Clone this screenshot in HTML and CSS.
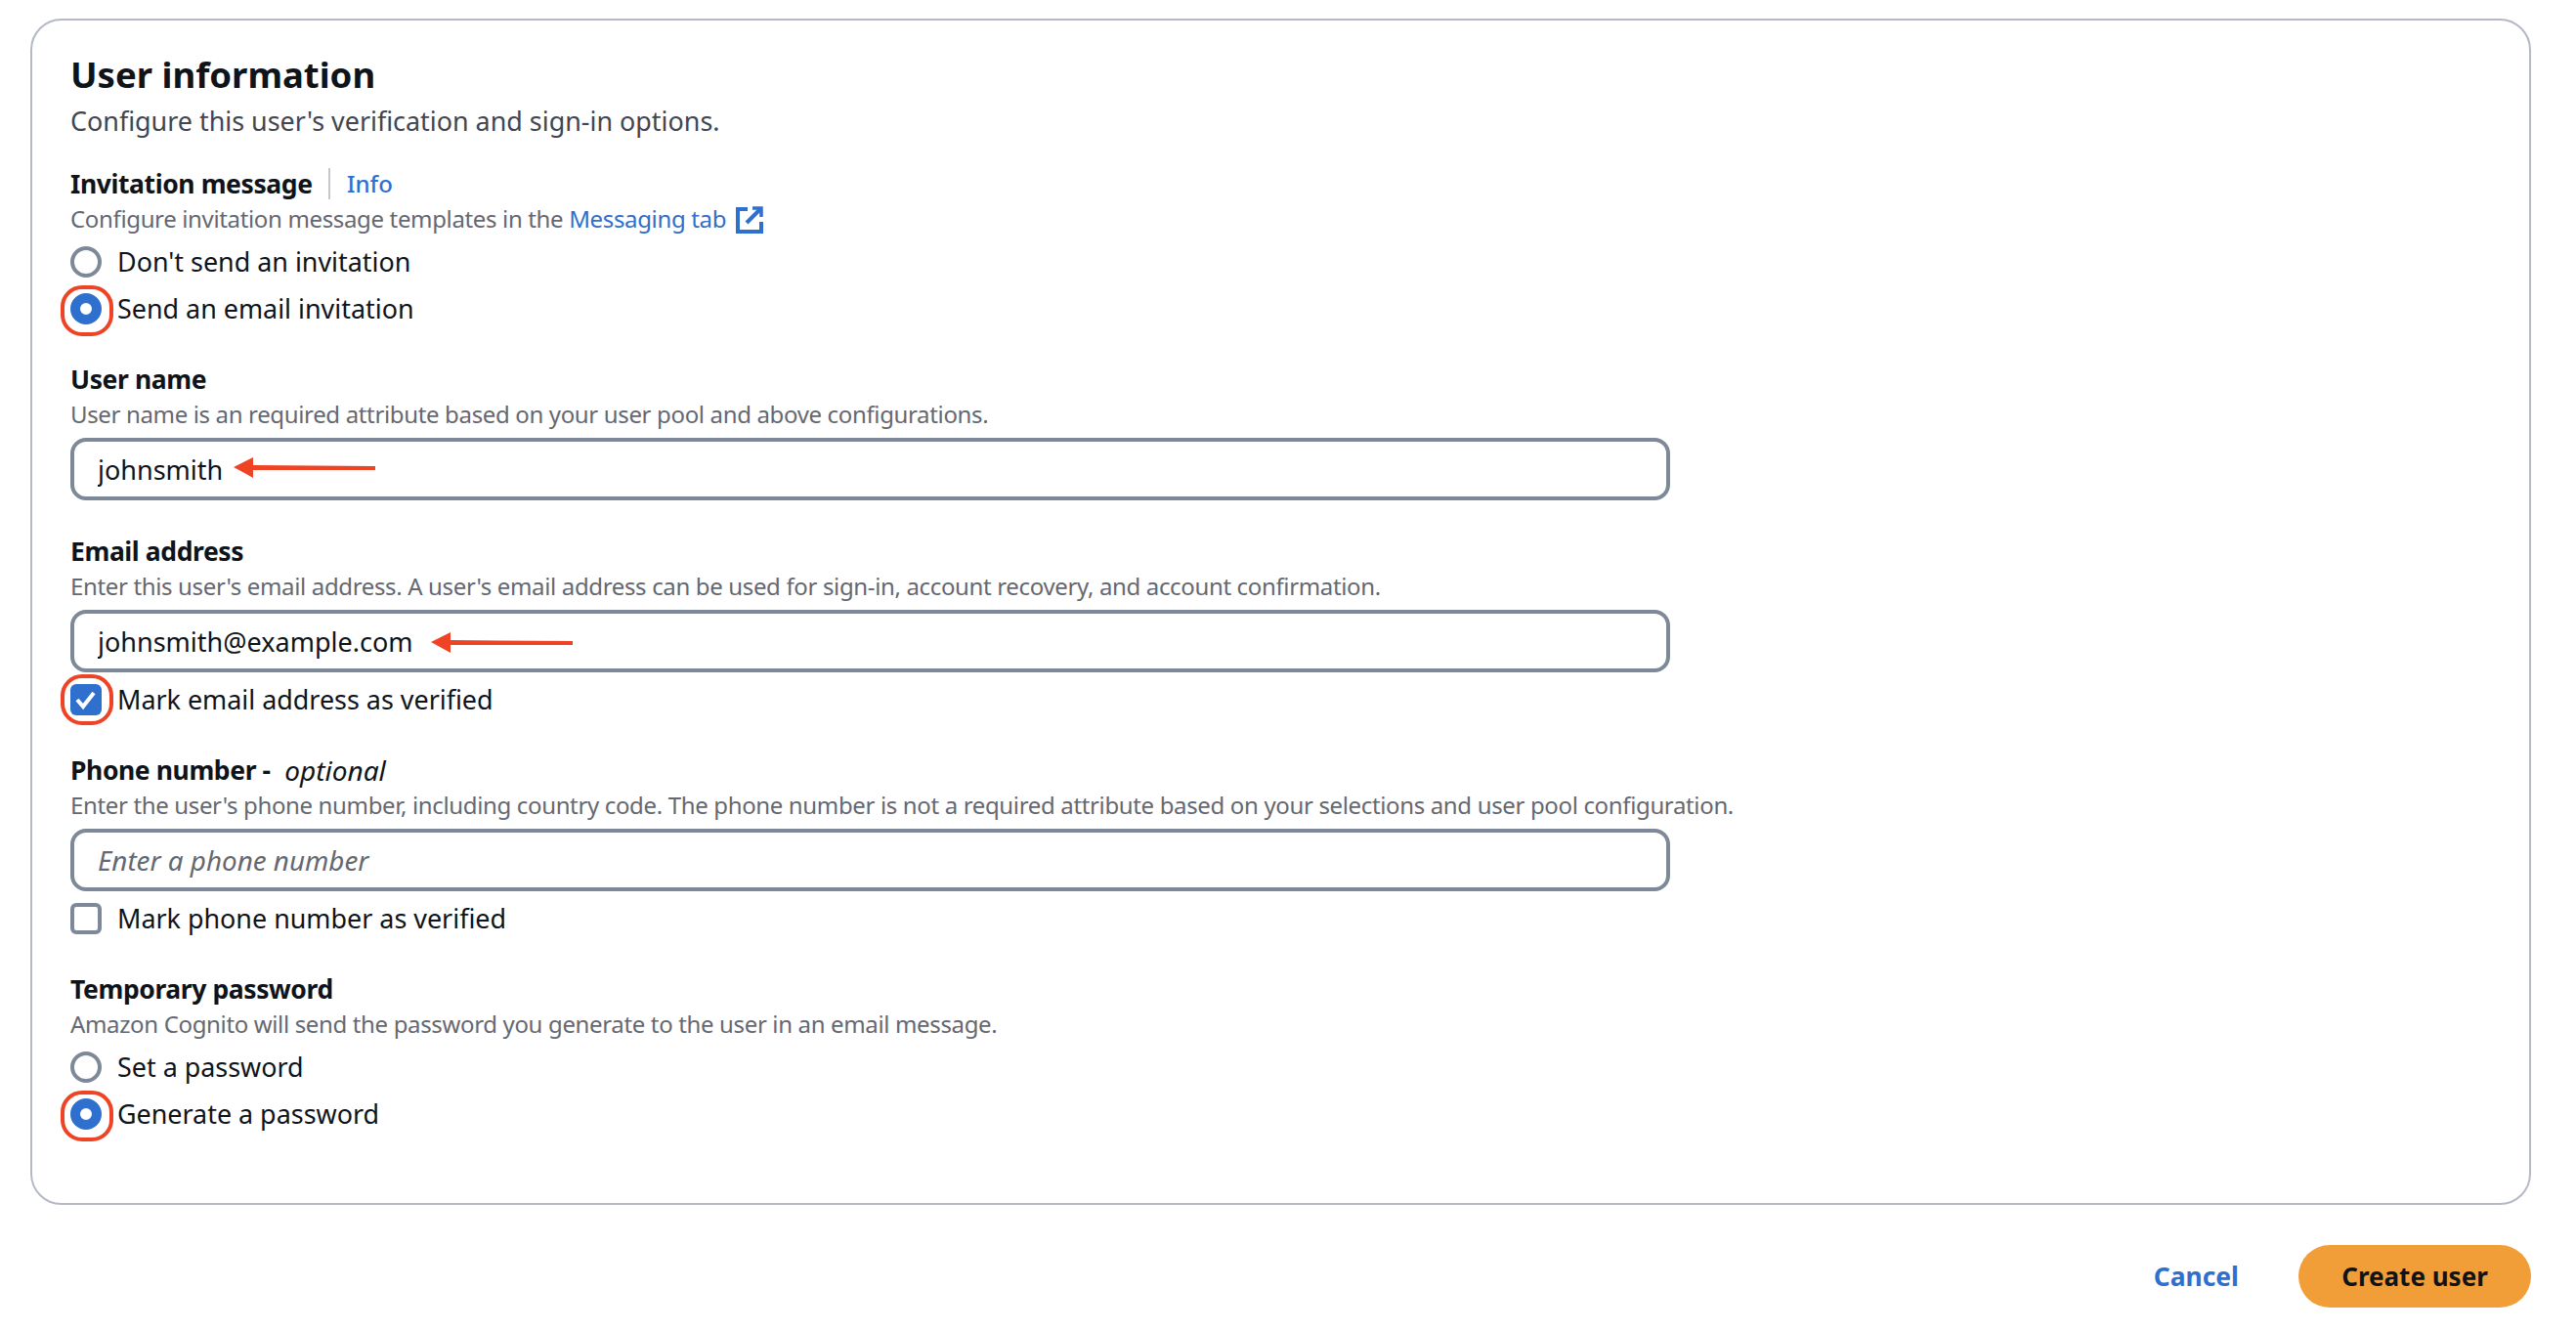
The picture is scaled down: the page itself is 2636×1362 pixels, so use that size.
FILE: index.html
```html
<!DOCTYPE html>
<html lang="en">
<head>
  <meta charset="UTF-8">
  <title>Create user</title>
  <link rel="stylesheet" href="styles.css">
</head>
<body>
  <div class="card">
    <h1 class="title">User information</h1>
    <p class="subtitle">Configure this user's verification and sign-in options.</p>

    <div class="field first">
      <div class="label">Invitation message <span class="info"><a class="info-link">Info</a></span></div>
      <div class="desc">Configure invitation message templates in the <a class="link">Messaging tab</a>
        <svg class="ext-icon" width="28" height="28" viewBox="0 0 28 28" fill="none" stroke="#2f6fce" stroke-width="4">
          <path d="M12 3H2v23h24V16"/>
          <path d="M11 17L25 3"/>
          <path d="M17 2h9v9" stroke-width="3.5"/>
        </svg>
      </div>
      <div class="options">
        <div class="option"><span class="radio"></span><span class="option-text">Don't send an invitation</span></div>
        <div class="option"><span class="radio checked marked"></span><span class="option-text">Send an email invitation</span></div>
      </div>
    </div>

    <div class="field">
      <div class="label">User name</div>
      <div class="desc">User name is an required attribute based on your user pool and above configurations.</div>
      <div class="input-wrap">
        <input class="input" value="johnsmith">
        <svg class="arrow arrow-user" width="145" height="22" viewBox="0 0 145 22"><path d="M0 10L20 0v8l125 1v4L20 13v8z" fill="#ee4325"/></svg>
      </div>
    </div>

    <div class="field">
      <div class="label">Email address</div>
      <div class="desc">Enter this user's email address. A user's email address can be used for sign-in, account recovery, and account confirmation.</div>
      <div class="input-wrap">
        <input class="input" value="johnsmith@example.com">
        <svg class="arrow arrow-email" width="145" height="22" viewBox="0 0 145 22"><path d="M0 10L20 0v8l125 1v4L20 13v8z" fill="#ee4325"/></svg>
      </div>
      <div class="option"><span class="checkbox checked marked"><svg width="32" height="32" viewBox="0 0 32 32" fill="none" stroke="#fff" stroke-width="4"><path d="M7 16l6 7 11-14"/></svg></span><span class="option-text">Mark email address as verified</span></div>
    </div>

    <div class="field">
      <div class="label">Phone number - <em class="optional">optional</em></div>
      <div class="desc">Enter the user's phone number, including country code. The phone number is not a required attribute based on your selections and user pool configuration.</div>
      <div class="input-wrap">
        <input class="input" placeholder="Enter a phone number">
      </div>
      <div class="option"><span class="checkbox"></span><span class="option-text">Mark phone number as verified</span></div>
    </div>

    <div class="field">
      <div class="label">Temporary password</div>
      <div class="desc">Amazon Cognito will send the password you generate to the user in an email message.</div>
      <div class="options">
        <div class="option"><span class="radio"></span><span class="option-text">Set a password</span></div>
        <div class="option"><span class="radio checked marked"></span><span class="option-text">Generate a password</span></div>
      </div>
    </div>
  </div>

  <div class="actions">
    <a class="cancel">Cancel</a>
    <button class="primary">Create user</button>
  </div>
</body>
</html>
```
FILE: styles.css
```css
* {
  margin: 0;
  padding: 0;
  box-sizing: border-box;
}

body {
  background-color: white;
  color: #0f141a;
  font-family: "Noto Sans", sans-serif;
  padding: 19px 46px 0 31px;
}

.card {
  height: 1214px;
  border: 2px solid #b4b9c5;
  border-radius: 32px;
  padding: 33px 40px 0 39px;
}

.title {
  font-size: 36.5px;
  line-height: 44px;
  font-weight: 700;
}

.subtitle {
  margin-top: 8px;
  font-size: 26.9px;
  line-height: 36px;
  color: #424650;
}

.field {
  display: flow-root;
  margin-top: 30px;
}

.field.first {
  margin-top: 28px;
}

.label {
  display: flex;
  align-items: center;
  font-size: 26.5px;
  letter-spacing: -0.4px;
  line-height: 36px;
  font-weight: 700;
  white-space: pre;
}

.optional {
  margin-left: 8px;
  font-size: 28px;
  letter-spacing: 0;
  font-weight: 400;
}

.info {
  margin-left: 10px;
  padding-left: 17px;
  border-left: 2px solid #c6c6cd;
  font-size: 24px;
  letter-spacing: 0;
  line-height: 32px;
  font-weight: 500;
}

.info-link,
.link {
  color: #2f6fce;
}

.desc {
  display: flex;
  align-items: center;
  font-size: 24px;
  letter-spacing: -0.35px;
  line-height: 35px;
  padding-bottom: 2px;
  color: #656871;
  white-space: pre-wrap;
}

.ext-icon {
  margin: 2px 0 0 10px;
}

.input-wrap {
  position: relative;
  margin: 5px 0 4px;
  width: 1637px;
}

.input {
  display: block;
  width: 100%;
  height: 64px;
  border: 4px solid #7d8998;
  border-radius: 16px;
  padding: 0 24px;
  font-family: inherit;
  font-size: 27px;
  color: #0f141a;
  outline: none;
}

.input::placeholder {
  font-size: 27.8px;
  font-style: italic;
  color: #656871;
}

.arrow {
  position: absolute;
}

.arrow-user {
  left: 167px;
  top: 20px;
}

.arrow-email {
  left: 369px;
  top: 23px;
}

.options {
  margin-top: 1px;
}

.option {
  display: flex;
  align-items: center;
  height: 48px;
  font-size: 26.9px;
}

.option-text {
  margin-bottom: 2px;
}

.radio,
.checkbox {
  position: relative;
  flex: none;
  width: 32px;
  height: 32px;
  margin-right: 16px;
  border: 4px solid #7d8998;
}

.radio {
  border-radius: 50%;
}

.checkbox {
  border-radius: 6px;
}

.radio.checked {
  border: 10px solid #2f6fce;
}

.checkbox.checked {
  border: 0;
  background-color: #2f6fce;
}

.checkbox svg {
  display: block;
}

/* red ring from the annotation */
.marked::after {
  content: "";
  position: absolute;
  box-sizing: border-box;
  width: 54px;
  height: 52px;
  border: 4px solid #ee4325;
  border-radius: 22px;
}

.radio.marked::after {
  top: -18px;
  left: -20px;
}

.checkbox.marked::after {
  top: -10px;
  left: -10px;
}

.actions {
  display: flex;
  justify-content: flex-end;
  align-items: center;
  margin-top: 41px;
}

.cancel {
  margin-right: 61px;
  font-size: 26.4px;
  font-weight: 700;
  color: #2f6fce;
}

.primary {
  width: 238px;
  height: 64px;
  border: 0;
  border-radius: 32px;
  background-color: #f29e38;
  font-family: inherit;
  font-size: 26px;
  font-weight: 700;
  color: #0f141a;
}
```
